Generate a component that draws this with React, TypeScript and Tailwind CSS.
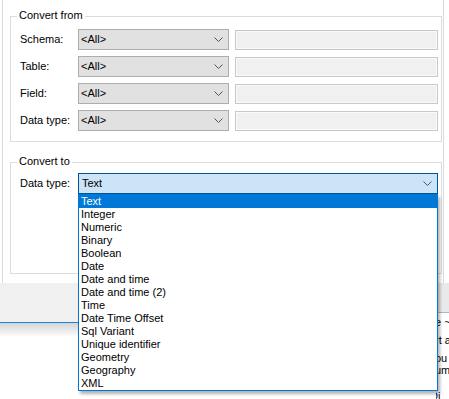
import React from "react";

const Chevron = () => (
  <svg width="9" height="5" viewBox="0 0 9 5" className="shrink-0">
    <path d="M0.5 0.5 L4.5 4.5 L8.5 0.5" fill="none" stroke="#555" strokeWidth="1" />
  </svg>
);

const Combo = () => (
  <div className="w-[151px] h-[21px] bg-[#e1e1e1] border border-[#adadad] flex items-center pl-[2px] pr-[5px] justify-between">
    <span>&lt;All&gt;</span>
    <Chevron />
  </div>
);

const Row = ({ label }: { label: string }) => (
  <div className="flex items-start h-[21px]">
    <div className="w-[59px] h-[21px] flex items-center pl-[1px]">{label}</div>
    <Combo />
    <div className="ml-[6px] mt-[1px] w-[203px] h-[20px] border border-[#c8c8c8] bg-[#f0f0f0] shadow-[inset_0_0_0_1px_#fafafa]" />
  </div>
);

const items = [
  "Text",
  "Integer",
  "Numeric",
  "Binary",
  "Boolean",
  "Date",
  "Date and time",
  "Date and time (2)",
  "Time",
  "Date Time Offset",
  "Sql Variant",
  "Unique identifier",
  "Geometry",
  "Geography",
  "XML",
];

export default function App() {
  return (
    <div
      className="relative w-[449px] h-[399px] overflow-hidden bg-white text-[11px] text-black leading-none"
      style={{ fontFamily: '"Liberation Sans", Arial, sans-serif' }}
    >
      {/* background window fragments */}
      <div className="absolute left-[436px] top-[313px] w-[13px] h-[86px] overflow-hidden bg-white">
        <div className="absolute left-[-1px] top-[4px] whitespace-nowrap">e ~</div>
        <div className="absolute left-[-1px] top-[22px] whitespace-nowrap">rt a</div>
        <div className="absolute left-[-1px] top-[40px] whitespace-nowrap">ou</div>
        <div className="absolute left-[-1px] top-[52px] whitespace-nowrap">uml</div>
        <div className="absolute left-[-6px] top-[78px] whitespace-nowrap">Di</div>
      </div>

      {/* dialog body */}
      <div className="ml-[2px] w-[442px] h-[283px] border-l border-r border-[#dadada] bg-white pl-[7px] pr-[1px] pt-[16px]">
        {/* Convert from */}
        <div className="relative border border-[#dcdcdc] h-[126px] pl-[8px] pt-[12px] flex flex-col gap-[6px]">
          <div className="absolute left-[6px] top-[-7px] bg-white px-[2px]">Convert from</div>
          <Row label="Schema:" />
          <Row label="Table:" />
          <Row label="Field:" />
          <Row label="Data type:" />
        </div>
        {/* Convert to */}
        <div className="relative mt-[20px] border border-[#dcdcdc] h-[112px] pl-[8px] pt-[10px]">
          <div className="absolute left-[6px] top-[-7px] bg-white px-[2px]">Convert to</div>
          <div className="flex items-start h-[21px]">
            <div className="w-[59px] h-[21px] flex items-center pl-[1px]">Data type:</div>
            <div className="w-[360px] h-[21px] bg-[#cce4f7] border border-[#005499] flex items-center justify-between pl-[3px] pr-[5px]">
              <span>Text</span>
              <Chevron />
            </div>
          </div>
        </div>
      </div>

      {/* button band + window border */}
      <div className="flex">
        <div className="w-[437px] h-[40px] bg-[#f0f0f0] border-b border-[#1883d7]" />
        <div className="w-[12px] h-[30px] bg-[#e9e9e9] border-b border-[#a9b8c8]" />
      </div>
      <div className="w-[437px] h-[14px] bg-gradient-to-b from-[#d4d4d4] to-white" />

      {/* dropdown list */}
      <div className="absolute left-[78px] top-[194px] w-[360px] border border-[#0078d7] bg-white shadow-[2px_3px_3px_rgba(0,0,0,0.3)]">
        {items.map((it, i) => (
          <div
            key={it}
            className={
              i === 0
                ? "h-[13px] flex items-center pl-[2px] bg-[#0078d7] text-white"
                : "h-[13px] flex items-center pl-[2px]"
            }
          >
            {it}
          </div>
        ))}
      </div>
    </div>
  );
}
